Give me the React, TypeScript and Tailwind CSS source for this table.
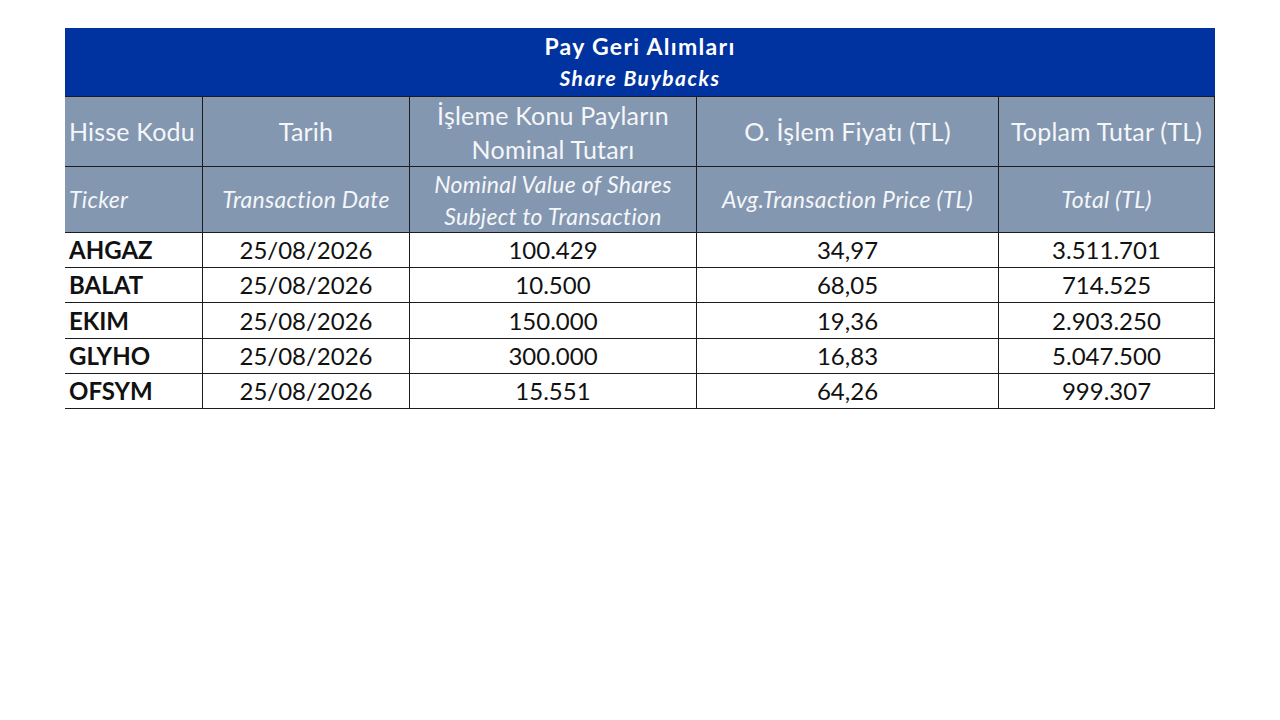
const rows = [
  ["AHGAZ", "25/08/2026", "100.429", "34,97", "3.511.701"],
  ["BALAT", "25/08/2026", "10.500", "68,05", "714.525"],
  ["EKIM", "25/08/2026", "150.000", "19,36", "2.903.250"],
  ["GLYHO", "25/08/2026", "300.000", "16,83", "5.047.500"],
  ["OFSYM", "25/08/2026", "15.551", "64,26", "999.307"],
];

const head = "flex items-center justify-center text-center border-r border-b border-[#1c1c1c] bg-[#8497b0] text-[#f4f6f9]";
const top = head + " text-[25px] tracking-[0.2px]";
const sub = head + " italic text-[23px] tracking-[0.3px]";
const cell = "flex items-center justify-center border-r border-b border-[#1c1c1c] text-[24px] text-[#111]";

export default function App() {
  return (
    <div className="w-[1280px] h-[720px] bg-white font-['Lato','Liberation_Sans',sans-serif]">
      <div className="ml-[65px] pt-[28px] w-[1150px]">
        <div className="h-[68px] bg-[#0033a0] flex flex-col items-center text-white">
          <div className="font-bold text-[23px] tracking-[1.3px] leading-[28px] mt-[4px]">Pay Geri Alımları</div>
          <div className="font-bold italic text-[21px] tracking-[1.5px] leading-[28px] mt-[4px]">Share Buybacks</div>
        </div>
        <div className="grid grid-cols-[138px_207px_287px_302px_216px] grid-rows-[70px_66px_35px_35px_36px_35px_35px] border-t border-[#1c1c1c]">
          <div className={top + " !justify-start pl-[4px]"}>Hisse Kodu</div>
          <div className={top}>Tarih</div>
          <div className={top + " leading-[34px]"}>İşleme Konu Payların<br />Nominal Tutarı</div>
          <div className={top}>O. İşlem Fiyatı (TL)</div>
          <div className={top}>Toplam Tutar (TL)</div>

          <div className={sub + " !justify-start pl-[4px]"}>Ticker</div>
          <div className={sub}>Transaction Date</div>
          <div className={sub + " leading-[32px]"}>Nominal Value of Shares<br />Subject to Transaction</div>
          <div className={sub}>Avg.Transaction Price (TL)</div>
          <div className={sub}>Total (TL)</div>

          {rows.map((r) =>
            r.map((v, i) => (
              <div
                key={r[0] + i}
                className={i === 0 ? cell + " !justify-start pl-[4px] font-bold" : cell}
              >
                {v}
              </div>
            ))
          )}
        </div>
      </div>
    </div>
  );
}
